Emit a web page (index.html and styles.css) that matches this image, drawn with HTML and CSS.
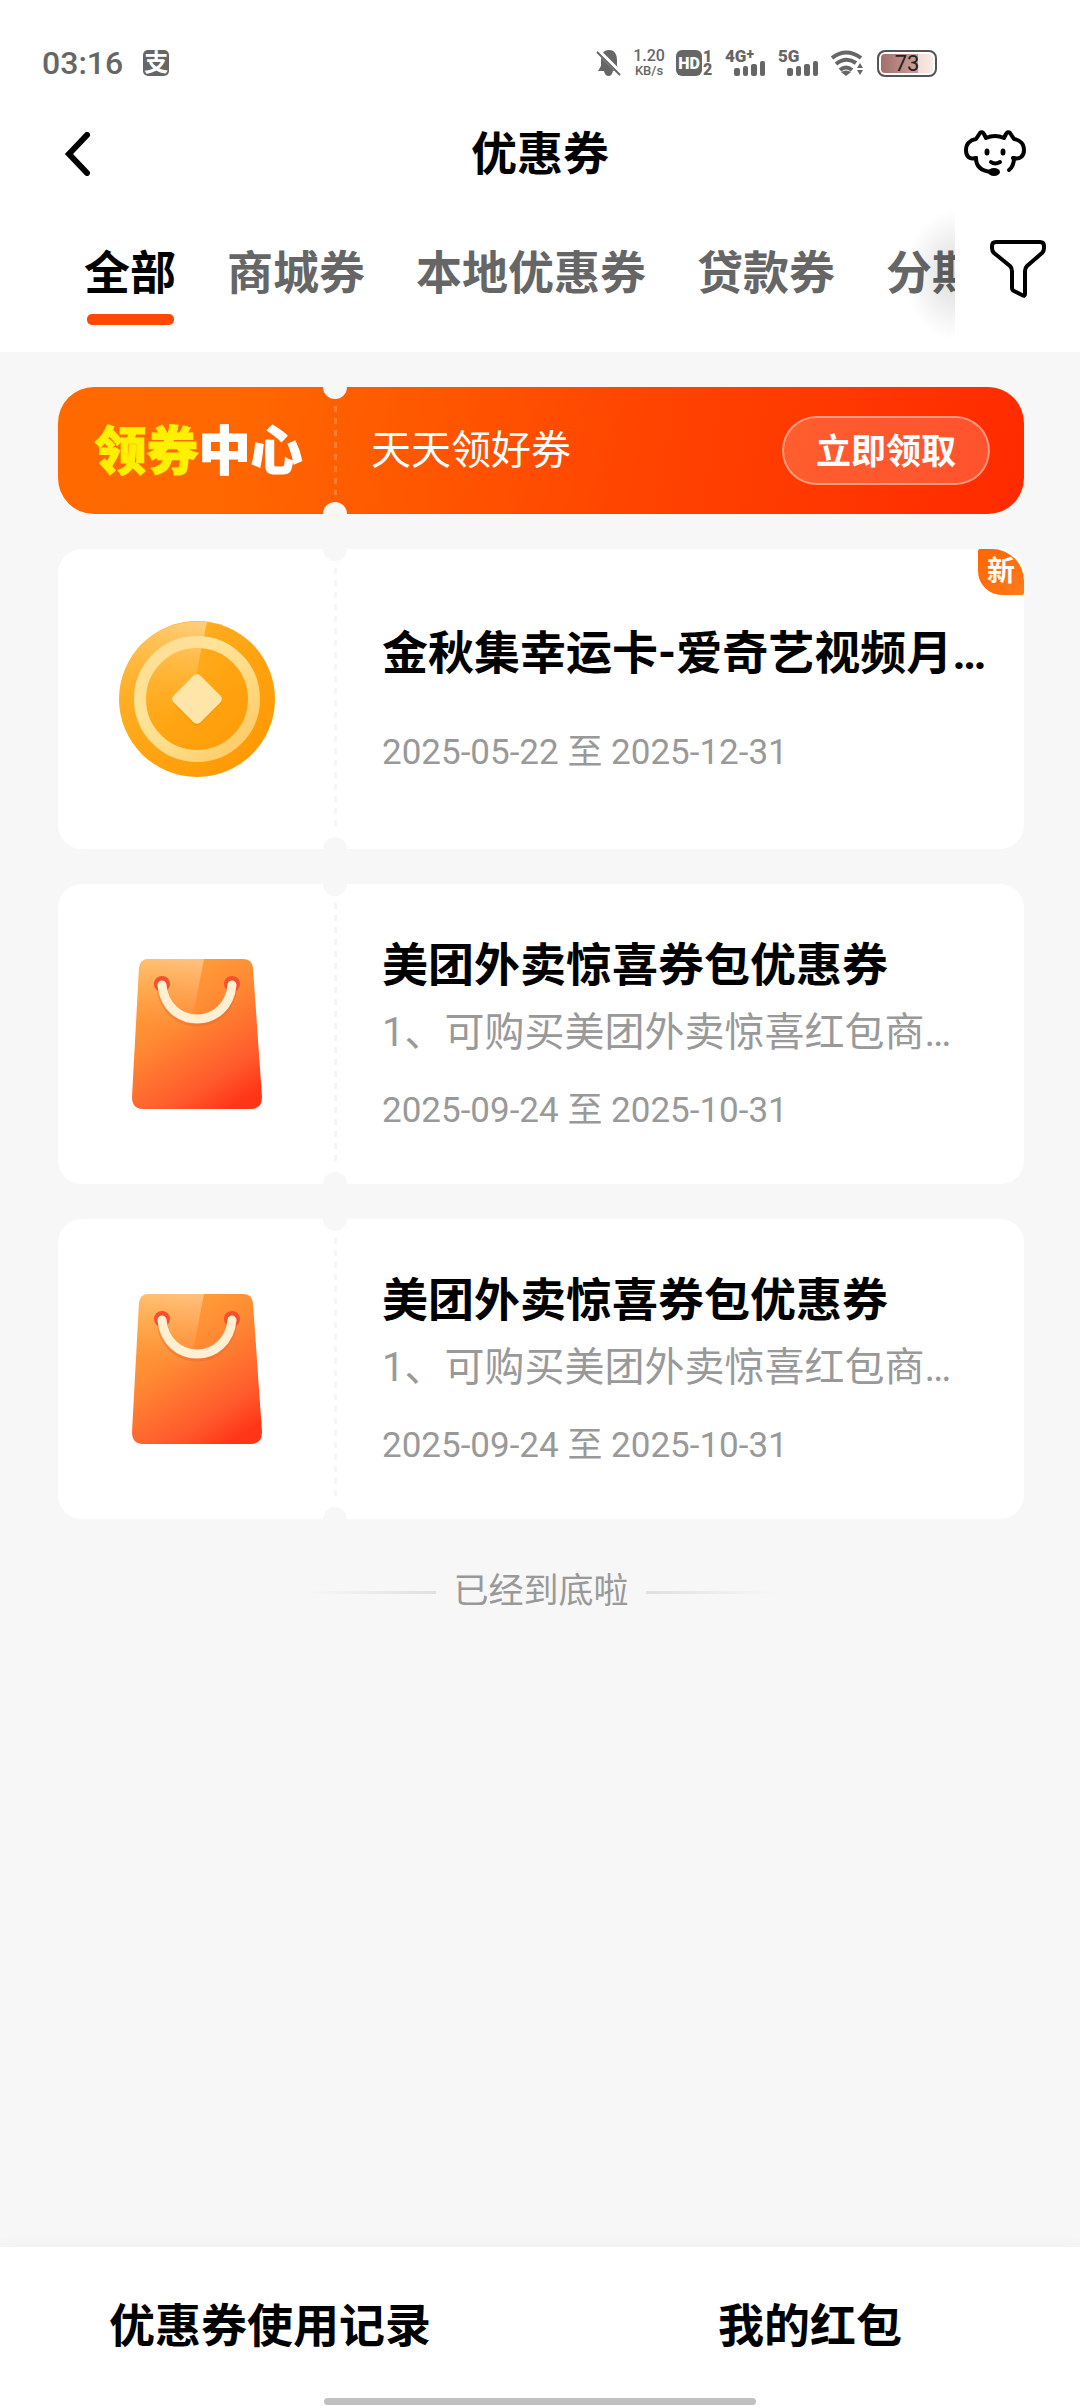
FILE: index.html
```html
<!DOCTYPE html>
<html lang="zh-CN">
<head>
<meta charset="utf-8">
<meta name="viewport" content="width=device-width, initial-scale=1">
<title>优惠券</title>
<link rel="stylesheet" href="styles.css">
</head>
<body>
<svg class="defs" width="0" height="0" aria-hidden="true">
  <defs>
    <linearGradient id="bagFill" x1="0.2" y1="0" x2="0.75" y2="1">
      <stop offset="0" stop-color="#ffa63c"/>
      <stop offset="0.4" stop-color="#ff8a33"/>
      <stop offset="0.8" stop-color="#ff5a2c"/>
      <stop offset="1" stop-color="#ff3518"/>
    </linearGradient>
    <linearGradient id="bagShine" gradientUnits="userSpaceOnUse" x1="66" y1="0" x2="50" y2="76">
      <stop offset="0" stop-color="#ffdcb0" stop-opacity="0.6"/>
      <stop offset="1" stop-color="#ffb060" stop-opacity="0"/>
    </linearGradient>
    <linearGradient id="coinFill" x1="0" y1="0" x2="1" y2="1">
      <stop offset="0" stop-color="#ffb736"/>
      <stop offset="0.5" stop-color="#ffa512"/>
      <stop offset="1" stop-color="#ff9500"/>
    </linearGradient>
    <linearGradient id="coinShine" gradientUnits="userSpaceOnUse" x1="84" y1="0" x2="50" y2="100">
      <stop offset="0" stop-color="#ffe2b0" stop-opacity="0.65"/>
      <stop offset="1" stop-color="#ffc050" stop-opacity="0"/>
    </linearGradient>
    <linearGradient id="coinRing" x1="0" y1="0" x2="1" y2="1">
      <stop offset="0" stop-color="#ffeaa6"/>
      <stop offset="0.55" stop-color="#ffde8c"/>
      <stop offset="1" stop-color="#ffc75e"/>
    </linearGradient>
    <symbol id="bag" viewBox="0 0 132 152">
      <path d="M18 1H112Q121 1 122 10L131 139Q131 151 120 151H12Q1 151 1 139L8 10Q9 1 18 1Z" fill="url(#bagFill)"/>
      <path d="M18 1H73L58 78L3 100L8 10Q9 1 18 1Z" fill="url(#bagShine)"/>
      <circle cx="31" cy="26" r="8" fill="#f4502c"/>
      <circle cx="101" cy="26" r="8" fill="#f4502c"/>
      <path d="M31 29C33 50 48 63 66 63S99 50 101 29" fill="none" stroke="#e8662a" stroke-opacity="0.4" stroke-width="11" stroke-linecap="round"/>
      <path d="M31 27C33 48 48 61 66 61S99 48 101 27" fill="none" stroke="#fff0d4" stroke-width="9" stroke-linecap="round"/>
    </symbol>
    <symbol id="bars" viewBox="0 0 32 15">
      <rect x="0" y="7" width="6" height="8" rx="2"/>
      <rect x="9" y="5" width="5" height="10" rx="2"/>
      <rect x="17" y="3" width="6" height="12" rx="2"/>
      <rect x="26" y="0" width="5" height="15" rx="2"/>
    </symbol>
  </defs>
</svg>

<header class="top">
  <div class="status">
    <div class="status-left">
      <span class="clock">03:16</span>
      <span class="pay">支</span>
    </div>
    <div class="status-right">
      <svg class="bell" width="26" height="28" viewBox="0 0 26 28" aria-hidden="true">
        <path d="M13 1C19 1 21 6 21 11V17L24 22H2L5 17V11C5 6 7 1 13 1Z"/>
        <path d="M8 22H17Q16 27 12.500 27T8 22Z"/>
        <path d="M0 0L27 27" stroke="#fff" stroke-width="5"/>
        <path d="M1 3L24 26" stroke="#666" stroke-width="2"/>
      </svg>
      <span class="speed"><b>1.20</b><small>KB/s</small></span>
      <span class="hd"><span class="hd-box">HD</span><span class="sims"><i>1</i><i>2</i></span></span>
      <span class="net"><b>4G<sup>+</sup></b><svg width="32" height="15" aria-hidden="true"><use href="#bars"/></svg></span>
      <span class="net"><b>5G</b><svg width="32" height="15" aria-hidden="true"><use href="#bars"/></svg></span>
      <svg class="wifi" width="34" height="26" viewBox="0 0 34 26" aria-hidden="true">
        <g fill="none" stroke="#666" stroke-width="4">
          <path d="M1 8Q15 -3 30 8"/>
          <path d="M5 14Q15 6 25 13"/>
          <path d="M9 20Q15 15 21 20"/>
        </g>
        <path d="M10 22Q15 19 20 22L15 26Z"/>
        <path d="M29 13L32 18H26ZM29 25L26 20H32Z"/>
      </svg>
      <span class="battery">73</span>
    </div>
  </div>

  <div class="titlebar">
    <button class="icon-btn" type="button" aria-label="返回">
      <svg width="28" height="44" viewBox="0 0 28 44" aria-hidden="true"><path d="M23 3L5 22L23 41" fill="none" stroke="#000" stroke-width="6" stroke-linecap="round" stroke-linejoin="miter"/></svg>
    </button>
    <h1>优惠券</h1>
    <button class="icon-btn" type="button" aria-label="客服">
      <svg width="62" height="48" viewBox="0 0 62 48" aria-hidden="true">
        <g fill="none" stroke="#000" stroke-width="4" stroke-linecap="round" stroke-linejoin="round">
          <path d="M12 28C5 30 2 26 2 20C2 14 6 10 12 9L16 3Q18 1 20 4L22 8Q31 4 40 8L42 4Q44 1 46 3L50 9C56 10 60 14 60 20C60 26 56 30 49 28"/>
          <path d="M12 28C12 36 17 41 27 42"/>
          <path d="M50 28Q50 36 45 40"/>
          <path d="M27 32Q31 35 36 32"/>
        </g>
        <ellipse cx="30" cy="42" rx="6" ry="4"/>
        <ellipse cx="23" cy="22" rx="2.500" ry="3.500"/>
        <ellipse cx="39" cy="22" rx="2.500" ry="3.500"/>
      </svg>
    </button>
  </div>

  <div class="filterbar">
    <nav class="tabs">
      <a class="active" href="#all">全部</a>
      <a href="#mall">商城券</a>
      <a href="#local">本地优惠券</a>
      <a href="#loan">贷款券</a>
      <a href="#instalment">分期</a>
    </nav>
    <button class="filter" type="button" aria-label="筛选">
      <svg width="56" height="58" viewBox="0 0 56 58" aria-hidden="true"><path d="M6 2H50Q54 2 54 6V8Q54 11 52 13L37 26Q35 28 35 31V54Q35 57 32 55L24 51Q22 50 22 48V31Q22 28 20 26L4 13Q2 11 2 8V6Q2 2 6 2Z" fill="none" stroke="#000" stroke-width="4" stroke-linejoin="round"/></svg>
    </button>
  </div>
</header>

<main>
  <section class="ticket banner">
    <div class="stub"><strong><em>领券</em>中心</strong></div>
    <div class="body">
      <p>天天领好券</p>
      <button class="claim" type="button">立即领取</button>
    </div>
  </section>

  <article class="ticket card">
    <div class="stub">
      <svg width="158" height="158" viewBox="0 0 158 158" aria-hidden="true">
        <circle cx="79" cy="79" r="78" fill="url(#coinFill)"/>
        <circle cx="79" cy="79" r="57" fill="none" stroke="url(#coinRing)" stroke-width="12"/>
        <path d="M89 2L77 60L50 100L4 100A78 78 0 0 1 89 2Z" fill="url(#coinShine)"/>
        <rect x="60" y="62" width="38" height="38" rx="5" transform="rotate(45 79 81)" fill="#f08a00" opacity="0.4"/>
        <rect x="60" y="60" width="38" height="38" rx="5" transform="rotate(45 79 79)" fill="#ffe6a8"/>
      </svg>
    </div>
    <div class="body">
      <h2>金秋集幸运卡-爱奇艺视频月…</h2>
      <time class="spaced">2025-05-22 至 2025-12-31</time>
    </div>
    <span class="badge">新</span>
  </article>

  <article class="ticket card">
    <div class="stub"><svg width="132" height="152" aria-hidden="true"><use href="#bag"/></svg></div>
    <div class="body">
      <h2>美团外卖惊喜券包优惠券</h2>
      <p>1、可购买美团外卖惊喜红包商…</p>
      <time>2025-09-24 至 2025-10-31</time>
    </div>
  </article>

  <article class="ticket card">
    <div class="stub"><svg width="132" height="152" aria-hidden="true"><use href="#bag"/></svg></div>
    <div class="body">
      <h2>美团外卖惊喜券包优惠券</h2>
      <p>1、可购买美团外卖惊喜红包商…</p>
      <time>2025-09-24 至 2025-10-31</time>
    </div>
  </article>

  <p class="end">已经到底啦</p>
</main>

<footer class="bottom">
  <div class="links">
    <a href="#records">优惠券使用记录</a>
    <a href="#redpacket">我的红包</a>
  </div>
  <div class="home"></div>
</footer>
</body>
</html>
```

FILE: styles.css
```css
* {
  box-sizing: border-box;
  margin: 0;
  padding: 0;
}

body {
  display: flex;
  flex-direction: column;
  min-height: 100vh;
  background: #f7f7f7;
  color: #000;
  font-family: Roboto, "Noto Sans CJK SC", sans-serif;
  font-size: 35px;
}

button {
  border: 0;
  background: none;
  font: inherit;
  color: inherit;
}

a {
  color: inherit;
  text-decoration: none;
}

svg {
  display: block;
}

.defs {
  position: absolute;
}

/* Header */

.top {
  background: #fff;
}

.status {
  display: flex;
  justify-content: space-between;
  align-items: center;
  height: 102px;
  padding: 24px 143px 0 42px;
  color: #666;
  fill: #666;
}

.status-left,
.status-right {
  display: flex;
  align-items: center;
}

.status-left {
  gap: 20px;
}

.clock {
  font-size: 32px;
  font-weight: 500;
  line-height: 38px;
}

.pay {
  width: 26px;
  height: 26px;
  border-radius: 5px;
  background: #666;
  color: #fff;
  font-size: 24px;
  font-weight: 700;
  line-height: 26px;
  text-align: center;
}

.status-right {
  gap: 12px;
}

.speed {
  display: flex;
  flex-direction: column;
  align-items: center;
  gap: 2px;
  width: 30px;
}

.speed b {
  font-size: 16px;
  font-weight: 500;
  line-height: 14px;
}

.speed small {
  font-size: 13px;
  font-weight: 500;
  line-height: 12px;
}

.hd {
  display: flex;
  gap: 1px;
  width: 37px;
  height: 26px;
}

.hd-box {
  width: 26px;
  border-radius: 6px;
  background: #666;
  color: #fff;
  font-size: 16px;
  font-weight: 900;
  line-height: 27px;
  text-align: center;
}

.sims {
  display: flex;
  flex-direction: column;
  align-items: center;
}

.sims i {
  font-size: 16px;
  font-style: normal;
  font-weight: 900;
  line-height: 13px;
}

.net {
  display: flex;
  flex-direction: column;
  align-items: flex-end;
  width: 41px;
  height: 26px;
}

.net b {
  align-self: flex-start;
  height: 11px;
  font-size: 17px;
  font-weight: 900;
  line-height: 12px;
}

.net sup {
  font-size: 14px;
  line-height: 1px;
  vertical-align: 3px;
}

.battery {
  width: 60px;
  height: 27px;
  border: 2px solid #555;
  border-radius: 8px;
  background: linear-gradient(90deg, #a06c66 0, #c79a94 60%, #c79a94 70%, #f3ddd6 70%, #fbeee8 100%);
  box-shadow: inset 0 0 0 2px #fff;
  color: #222;
  font-size: 22px;
  line-height: 23px;
  text-align: center;
}

.titlebar {
  display: flex;
  justify-content: space-between;
  align-items: center;
  height: 102px;
  padding: 2px 54px 0 64px;
}

.icon-btn {
  display: flex;
}

h1 {
  flex: 1;
  padding-right: 24px;
  padding-left: 48px;
  font-size: 46px;
  font-weight: 700;
  line-height: 68px;
  text-align: center;
}

.filterbar {
  display: flex;
  height: 148px;
}

.tabs {
  position: relative;
  display: flex;
  flex: 1;
  gap: 51px;
  min-width: 0;
  padding: 35px 0 0 84px;
  overflow: hidden;
  color: #666;
  white-space: nowrap;
}

.tabs::after {
  content: "";
  position: absolute;
  top: 6px;
  right: 0;
  width: 50px;
  height: 130px;
  background: radial-gradient(ellipse at 100% 50%, rgba(0, 0, 0, 0.13) 0, rgba(0, 0, 0, 0.08) 30%, rgba(0, 0, 0, 0.02) 60%, rgba(0, 0, 0, 0) 71%);
}

.tabs a {
  flex: none;
  height: 86px;
  font-size: 46px;
  font-weight: 700;
  line-height: 68px;
}

.tabs .active {
  display: flex;
  flex-direction: column;
  justify-content: space-between;
  align-items: center;
  color: #000;
}

.tabs .active::after {
  content: "";
  width: 87px;
  height: 11px;
  border-radius: 5px;
  background: #ff4800;
}

.filter {
  display: flex;
  flex: none;
  justify-content: center;
  width: 125px;
  padding-top: 36px;
}

/* Coupons */

main {
  display: flex;
  flex: 1;
  flex-direction: column;
  gap: 35px;
  padding: 35px 56px 35px 58px;
}

.ticket {
  position: relative;
  display: flex;
  border-radius: 24px;
  background: #fff;
}

.ticket::before,
.ticket::after {
  content: "";
  position: absolute;
  left: 265px;
  width: 24px;
  height: 12px;
  background: #f7f7f7;
}

.ticket::before {
  top: 0;
  border-radius: 0 0 12px 12px;
}

.ticket::after {
  bottom: 0;
  border-radius: 12px 12px 0 0;
}

.stub {
  position: relative;
  display: flex;
  flex: none;
  justify-content: center;
  align-items: center;
  width: 277px;
}

.stub::after {
  content: "";
  position: absolute;
  top: 19px;
  right: -2px;
  bottom: 19px;
  width: 3px;
  background: repeating-linear-gradient(#f5f5f5 0, #f5f5f5 6px, transparent 6px, transparent 12px);
}

.body {
  display: flex;
  flex: 1;
  min-width: 0;
}

.banner {
  min-height: 127px;
  border-radius: 36px;
  background: linear-gradient(100deg, #ff6a00 0, #ff6600 20%, #ff4400 60%, #ff2a00 100%);
  color: #fff;
}

.banner .stub::after {
  background: repeating-linear-gradient(rgba(255, 255, 255, 0.2) 0, rgba(255, 255, 255, 0.2) 6px, transparent 6px, transparent 12px);
}

.banner strong {
  padding: 4px 0 0 4px;
  font-size: 52px;
  font-weight: 900;
  line-height: 64px;
  -webkit-text-stroke: 1px;
}

.banner em {
  color: #fff000;
  font-style: normal;
}

.banner .body {
  justify-content: space-between;
  align-items: center;
  padding: 0 34px 0 36px;
}

.banner p {
  font-size: 40px;
  line-height: 58px;
}

.claim {
  width: 208px;
  height: 69px;
  padding-bottom: 5px;
  border: 2px solid rgba(255, 255, 255, 0.4);
  border-radius: 35px;
  background: rgba(255, 255, 255, 0.18);
  font-size: 35px;
  font-weight: 700;
}

.card {
  min-height: 300px;
}

.card .body {
  flex-direction: column;
  justify-content: center;
  padding: 0 36px 0 47px;
  color: #999;
  white-space: nowrap;
}

.card h2 {
  color: #000;
  font-size: 46px;
  font-weight: 700;
  line-height: 68px;
}

.card p {
  font-size: 40px;
  line-height: 68px;
}

.card time {
  margin-top: 18px;
  font-size: 35px;
  line-height: 52px;
}

.card .spaced {
  margin-top: 40px;
}

.badge {
  position: absolute;
  top: 0;
  right: 0;
  width: 46px;
  height: 46px;
  border-radius: 2px 32px 2px 24px;
  background: linear-gradient(135deg, #ff6600, #ff7a1c);
  color: #fff;
  font-size: 28px;
  font-weight: 700;
  line-height: 46px;
  text-align: center;
}

.end {
  display: flex;
  justify-content: center;
  align-items: center;
  gap: 17px;
  padding-top: 12px;
  color: #999;
  font-size: 35px;
  line-height: 52px;
}

.end::before,
.end::after {
  content: "";
  width: 129px;
  height: 3px;
  background: linear-gradient(90deg, rgba(224, 224, 224, 0), #e0e0e0);
}

.end::after {
  background: linear-gradient(270deg, rgba(224, 224, 224, 0), #e0e0e0);
}

/* Bottom bar */

.bottom {
  position: sticky;
  bottom: 0;
  background: #fff;
  box-shadow: 0 0 16px rgba(0, 0, 0, 0.04);
}

.links {
  display: grid;
  grid-template-columns: 1fr 1fr;
  padding: 45px 0 38px;
  font-size: 46px;
  font-weight: 700;
  line-height: 68px;
  text-align: center;
}

.home {
  width: 40%;
  height: 7px;
  margin: 0 auto 3px;
  border-radius: 4px;
  background: #c0c0c0;
}
```
